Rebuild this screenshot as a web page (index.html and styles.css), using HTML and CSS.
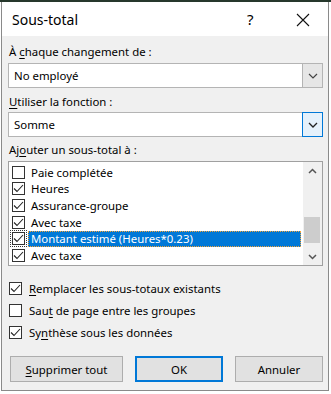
FILE: index.html
```html
<!DOCTYPE html>
<html lang="fr">
<head>
    <meta charset="UTF-8">
    <meta name="viewport" content="width=device-width, initial-scale=1.0">
    <title>Sous-total</title>
    <link rel="stylesheet" href="styles.css">
</head>
<body>
    <div class="ribbon"></div>
    <div class="dialog">
        <div class="titlebar">
            <span class="title">Sous-total</span>
            <span class="help">?</span>
            <span class="close">
                <svg width="14" height="14" viewBox="0 0 14 14"><path d="M1 1 L13 13 M13 1 L1 13" stroke="#111" stroke-width="1.1" fill="none"/></svg>
            </span>
        </div>
        <div class="content">
            <div class="label">À <u>c</u>haque changement de :</div>
            <div class="combo">
                <div class="value">No employé</div>
                <div class="drop">
                    <svg width="10" height="6" viewBox="0 0 10 6"><path d="M1 1 L5 5 L9 1" stroke="#444" stroke-width="1.2" fill="none"/></svg>
                </div>
            </div>

            <div class="label l2"><u>U</u>tiliser la fonction :</div>
            <div class="combo">
                <div class="value">Somme</div>
                <div class="drop focus">
                    <svg width="10" height="6" viewBox="0 0 10 6"><path d="M1 1 L5 5 L9 1" stroke="#222" stroke-width="1.3" fill="none"/></svg>
                </div>
            </div>

            <div class="label l3">Aj<u>o</u>uter un sous-total à :</div>
            <div class="listbox">
                <div class="items">
                    <div class="row"><span class="box"></span><span class="txt">Paie complétée</span></div>
                    <div class="row"><span class="box checked"></span><span class="txt">Heures</span></div>
                    <div class="row"><span class="box checked"></span><span class="txt">Assurance-groupe</span></div>
                    <div class="row"><span class="box checked"></span><span class="txt">Avec taxe</span></div>
                    <div class="row sel"><span class="box checked"></span><span class="txt">Montant estimé (Heures*0.23)</span></div>
                    <div class="row"><span class="box checked"></span><span class="txt">Avec taxe</span></div>
                </div>
                <div class="scrollbar">
                    <div class="arrow">
                        <svg width="9" height="6" viewBox="0 0 9 6"><path d="M1 5 L4.5 1.5 L8 5" stroke="#555" stroke-width="1.5" fill="none"/></svg>
                    </div>
                    <div class="track"><div class="thumb"></div></div>
                    <div class="arrow">
                        <svg width="9" height="6" viewBox="0 0 9 6"><path d="M1 1 L4.5 4.5 L8 1" stroke="#555" stroke-width="1.5" fill="none"/></svg>
                    </div>
                </div>
            </div>

            <div class="options">
                <div class="opt"><span class="box checked"></span><span><u>R</u>emplacer les sous-totaux existants</span></div>
                <div class="opt"><span class="box"></span><span>Sau<u>t</u> de page entre les groupes</span></div>
                <div class="opt"><span class="box checked"></span><span>Sy<u>n</u>thèse sous les données</span></div>
            </div>

            <div class="buttons">
                <div class="btn wide"><u>S</u>upprimer tout</div>
                <div class="btn default">OK</div>
                <div class="btn">Annuler</div>
            </div>
        </div>
    </div>
</body>
</html>
```

FILE: styles.css
```css
body{
    margin: 0;
    background-color: #fff;
    font-family: "Noto Sans", "Open Sans", sans-serif;
    font-size: 11.4px;
    color: #000;
}
u{
    text-underline-offset: 2px;
}
.ribbon{
    height: 2px;
    background-color: #26382c;
}
.dialog{
    width: 326px;
    margin-left: 1px;
    border: 1px solid #8a8a8a;
    border-top: none;
}
.titlebar{
    height: 34px;
    background-color: #fff;
    display: flex;
    align-items: center;
}
.titlebar .title{
    font-size: 14px;
    padding-left: 10px;
    flex: 1;
}
.titlebar .help{
    font-size: 15px;
    width: 49px;
}
.titlebar .close{
    width: 32px;
    display: flex;
    padding-top: 1px;
}
.content{
    background-color: #f0f0f0;
    padding: 8px 5px 8px 6px;
}
.label{
    line-height: 15px;
    padding-left: 1px;
}
.label.l2{
    margin-top: 6px;
}
.label.l3{
    margin-top: 5px;
}
.combo{
    margin-top: 4px;
    height: 25px;
    box-sizing: border-box;
    border: 1px solid #b4b4b4;
    background-color: #fff;
    display: flex;
}
.label.l2 + .combo{
    margin-top: 3px;
}
.combo .value{
    flex: 1;
    padding-left: 5px;
    line-height: 23px;
}
.combo .drop{
    width: 19px;
    background-color: #e6e6e6;
    border-left: 1px solid #b4b4b4;
    display: flex;
    align-items: center;
    justify-content: center;
}
.combo .drop.focus{
    background-color: #e5f1fb;
    border: 1px solid #0078d7;
    margin: -1px -1px -1px 0;
}
.listbox{
    margin-top: 4px;
    height: 105px;
    box-sizing: border-box;
    border: 1px solid #a0a0a0;
    background-color: #fff;
    display: flex;
}
.items{
    flex: 1;
    padding-top: 2px;
    overflow: hidden;
}
.row{
    height: 16.6px;
    display: flex;
    align-items: center;
    padding-left: 3px;
}
.box{
    width: 13px;
    height: 13px;
    box-sizing: border-box;
    border: 1px solid #333;
    background-color: #fff;
    flex: none;
}
.box.checked{
    background-image: url("data:image/svg+xml;utf8,<svg xmlns='http://www.w3.org/2000/svg' width='11' height='11' viewBox='0 0 11 11'><path d='M1 5.5 L4 8.5 L10 2' stroke='%23222' stroke-width='1.1' fill='none'/></svg>");
    background-repeat: no-repeat;
}
.row .txt{
    margin-left: 6px;
    white-space: nowrap;
}
.row.sel .box{
    outline: 1px dotted #333;
    outline-offset: 1px;
}
.row.sel .txt{
    margin-left: 3px;
    padding-left: 2px;
    flex: 1;
    margin-right: 2px;
    height: 16px;
    line-height: 14px;
    box-sizing: border-box;
    background-color: #0078d7;
    color: #fff;
    border: 1px dotted #f3a43a;
}
.scrollbar{
    width: 19px;
    background-color: #f0f0f0;
    display: flex;
    flex-direction: column;
}
.scrollbar .arrow{
    height: 17px;
    display: flex;
    align-items: center;
    justify-content: center;
}
.scrollbar .track{
    flex: 1;
}
.scrollbar .thumb{
    margin: 38px 2px 0 1px;
    height: 26px;
    background-color: #cdcdcd;
}
.options{
    margin-top: 11px;
}
.opt{
    height: 22px;
    display: flex;
    align-items: center;
    padding-left: 1px;
}
.opt .box{
    margin-right: 7px;
}
.buttons{
    margin-top: 13px;
    display: flex;
    justify-content: space-between;
    padding-left: 2px;
}
.btn{
    width: 88px;
    height: 26px;
    box-sizing: border-box;
    border: 1px solid #adadad;
    background-color: #e1e1e1;
    display: flex;
    align-items: center;
    justify-content: center;
}
.btn.wide{
    width: 113px;
}
.btn.default{
    border: 2px solid #0078d7;
}
```
